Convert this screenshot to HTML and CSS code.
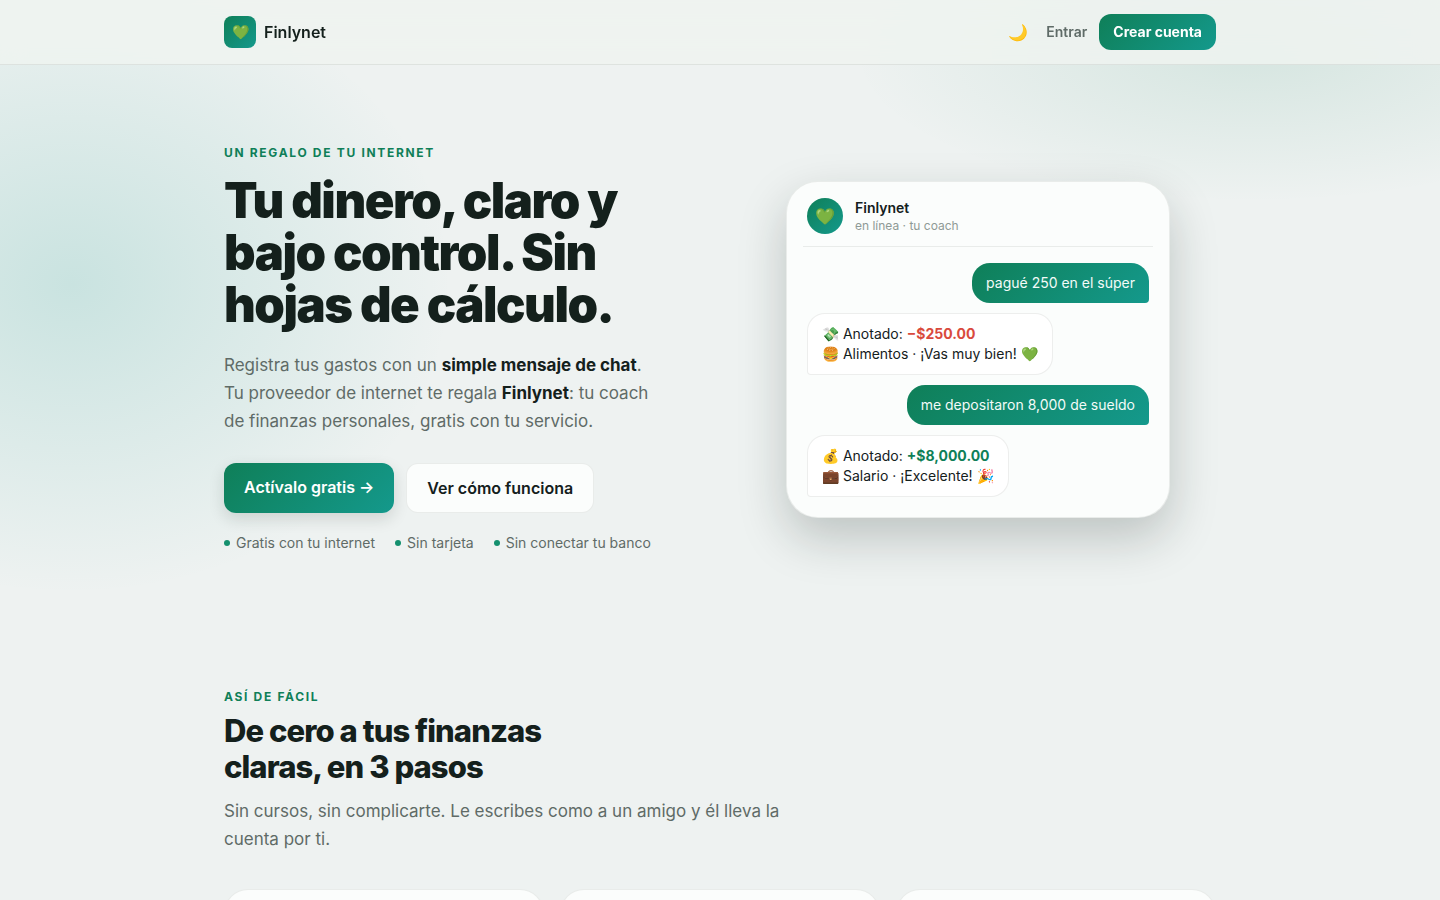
FILE: index.html
```html
<!DOCTYPE html>
<html lang="es">
<head>
  <meta charset="UTF-8" />
  <title>Finlynet</title>
  <meta name="viewport" content="width=device-width, initial-scale=1.0" />
  <link rel="stylesheet" href="styles.css">
</head>
<body>
  <header class="nav">
    <div class="container nav-inner">
      <a class="brand" href="#"><span class="logo">💚</span>Finlynet</a>
      <nav class="nav-actions">
        <button class="theme-toggle" type="button" aria-label="Cambiar tema">🌙</button>
        <a class="nav-link" href="#entrar">Entrar</a>
        <a class="btn btn-primary btn-small" href="#crear">Crear cuenta</a>
      </nav>
    </div>
  </header>

  <main class="container">
    <section class="hero">
      <div class="hero-copy">
        <p class="eyebrow">Un regalo de tu internet</p>
        <h1>Tu dinero, claro y bajo control. Sin hojas de cálculo.</h1>
        <p class="lead">Registra tus gastos con un <strong>simple mensaje de chat</strong>. Tu proveedor de internet te regala <strong>Finlynet</strong>: tu coach de finanzas personales, gratis con tu servicio.</p>
        <div class="cta">
          <a class="btn btn-primary btn-raised" href="#crear">Actívalo gratis →</a>
          <a class="btn btn-ghost" href="#pasos">Ver cómo funciona</a>
        </div>
        <ul class="trust">
          <li>Gratis con tu internet</li>
          <li>Sin tarjeta</li>
          <li>Sin conectar tu banco</li>
        </ul>
      </div>

      <div class="phone">
        <div class="phone-head">
          <span class="avatar">💚</span>
          <div>
            <p class="phone-name">Finlynet</p>
            <p class="phone-status">en línea · tu coach</p>
          </div>
        </div>
        <div class="chat">
          <p class="bubble me">pagué 250 en el súper</p>
          <p class="bubble bot">💸 Anotado: <b class="neg">−$250.00</b><br>🍔 Alimentos · ¡Vas muy bien! 💚</p>
          <p class="bubble me">me depositaron 8,000 de sueldo</p>
          <p class="bubble bot">💰 Anotado: <b class="pos">+$8,000.00</b><br>💼 Salario · ¡Excelente! 🎉</p>
        </div>
      </div>
    </section>

    <section class="steps" id="pasos">
      <p class="eyebrow">Así de fácil</p>
      <h2>De cero a tus finanzas claras, en 3 pasos</h2>
      <p class="lead">Sin cursos, sin complicarte. Le escribes como a un amigo y él lleva la cuenta por ti.</p>
      <div class="cards">
        <article class="card"></article>
        <article class="card"></article>
        <article class="card"></article>
      </div>
    </section>
  </main>
</body>
</html>
```
FILE: styles.css
```css
:root {
  --bg: #eef2f1;
  --surface: #fbfdfc;
  --ink: #14201c;
  --muted: #5f6b67;
  --soft: #8f9a96;
  --line: rgba(20, 32, 28, 0.08);
  --green: #0f7f58;
  --grad: linear-gradient(135deg, #0f7f58, #14998c);
}

* {
  box-sizing: border-box;
  margin: 0;
  padding: 0;
}

html {
  overflow-x: hidden;
  scrollbar-width: none;
}

body {
  font-family: Inter, "Liberation Sans", sans-serif;
  font-size: 16px;
  line-height: 24px;
  color: var(--ink);
  background:
    radial-gradient(400px 150px at 87% 52px, rgba(15, 127, 88, 0.11), transparent),
    radial-gradient(380px 310px at 5% 284px, rgba(20, 153, 140, 0.17), transparent),
    var(--bg);
}

a {
  color: inherit;
  text-decoration: none;
}

.container {
  max-width: 1040px;
  margin: 0 auto;
  padding: 0 24px;
}

/* top bar */
.nav {
  position: sticky;
  top: 0;
  z-index: 10;
  background: rgba(238, 243, 240, 0.85);
  backdrop-filter: blur(12px);
  border-bottom: 1px solid var(--line);
}

.nav-inner {
  display: flex;
  align-items: center;
  justify-content: space-between;
  height: 64px;
}

.brand {
  display: flex;
  align-items: center;
  gap: 8px;
  font-weight: 600;
}

.logo,
.avatar {
  display: grid;
  place-items: center;
  background: var(--grad);
}

.logo {
  width: 32px;
  height: 32px;
  border-radius: 8px;
  font-size: 14px;
}

.nav-actions {
  display: flex;
  align-items: center;
  gap: 12px;
}

.theme-toggle {
  padding: 0 6px;
  border: 0;
  background: none;
  font: inherit;
  cursor: pointer;
}

.nav-link {
  font-size: 14px;
  font-weight: 600;
  color: var(--muted);
}

/* buttons */
.btn {
  padding: 12px 20px;
  border-radius: 12px;
  font-weight: 600;
}

.btn-primary {
  background: var(--grad);
  color: #fff;
}

.btn-small {
  padding: 6px 14px;
  font-size: 14px;
  font-weight: 700;
}

.btn-raised {
  box-shadow: 0 6px 16px rgba(20, 32, 28, 0.14);
}

.btn-ghost {
  background: var(--surface);
  border: 1px solid var(--line);
}

/* hero */
.hero {
  display: grid;
  grid-template-columns: 1fr 1fr;
  gap: 40px;
  align-items: center;
  padding: 80px 0 72px;
}

.eyebrow {
  font-size: 12px;
  line-height: 16px;
  font-weight: 700;
  letter-spacing: 0.14em;
  text-transform: uppercase;
  color: var(--green);
}

h1 {
  margin-top: 14px;
  max-width: 440px;
  font-size: 49px;
  line-height: 52px;
  font-weight: 900;
  letter-spacing: -0.03em;
}

.lead {
  font-size: 17px;
  line-height: 28px;
  color: var(--muted);
}

.lead strong {
  font-weight: 700;
  color: var(--ink);
}

.hero .lead {
  margin-top: 20px;
  max-width: 440px;
}

.cta {
  display: flex;
  gap: 12px;
  margin-top: 28px;
}

.trust {
  display: flex;
  gap: 20px;
  margin-top: 20px;
  list-style: none;
  font-size: 14px;
  line-height: 20px;
  color: var(--muted);
}

.trust li {
  display: flex;
  align-items: center;
  gap: 6px;
}

.trust li::before {
  content: "";
  width: 6px;
  height: 6px;
  border-radius: 50%;
  background: #14906e;
}

/* chat preview */
.phone {
  width: 100%;
  max-width: 384px;
  margin: 0 auto;
  padding: 16px;
  border: 1px solid var(--line);
  border-radius: 32px;
  background: var(--surface);
  box-shadow: 0 20px 48px rgba(20, 32, 28, 0.22);
}

.phone-head {
  display: flex;
  align-items: center;
  gap: 12px;
  padding: 0 4px 12px;
  border-bottom: 1px solid var(--line);
}

.avatar {
  width: 36px;
  height: 36px;
  border-radius: 50%;
}

.phone-name {
  font-size: 14px;
  line-height: 20px;
  font-weight: 600;
}

.phone-status {
  font-size: 12px;
  line-height: 16px;
  color: var(--soft);
}

.chat {
  display: flex;
  flex-direction: column;
  gap: 10px;
  padding: 16px 4px 4px;
}

.bubble {
  padding: 10px 14px;
  border-radius: 18px;
  font-size: 14px;
  line-height: 20px;
}

.me {
  align-self: flex-end;
  border-bottom-right-radius: 4px;
  background: var(--grad);
  color: #f3fbf8;
}

.bot {
  align-self: flex-start;
  border: 1px solid var(--line);
  border-bottom-left-radius: 4px;
  background: #fff;
}

.bubble b {
  font-weight: 700;
}

.neg {
  color: #d94a3d;
}

.pos {
  color: var(--green);
}

/* steps */
.steps {
  padding: 64px 0;
}

h2 {
  margin-top: 8px;
  max-width: 400px;
  font-size: 31px;
  line-height: 36px;
  font-weight: 800;
  letter-spacing: -0.03em;
}

.steps .lead {
  margin-top: 12px;
  max-width: 576px;
}

.cards {
  display: grid;
  grid-template-columns: repeat(3, 1fr);
  gap: 16px;
  margin-top: 36px;
}

.card {
  min-height: 220px;
  border: 1px solid var(--line);
  border-radius: 24px;
  background: var(--surface);
}

@media (max-width: 800px) {
  .hero,
  .cards {
    grid-template-columns: 1fr;
  }
}
```
